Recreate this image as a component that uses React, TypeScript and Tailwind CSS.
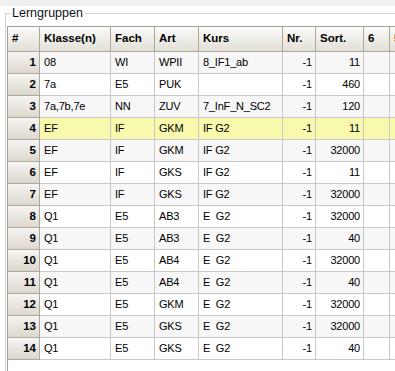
import React from "react";

type Row = {
    nr: number;
    klasse: string;
    fach: string;
    art: string;
    kurs: string;
    n: string;
    sort: string;
};

const rows: Row[] = [
    { nr: 1, klasse: "08", fach: "WI", art: "WPII", kurs: "8_IF1_ab", n: "-1", sort: "11" },
    { nr: 2, klasse: "7a", fach: "E5", art: "PUK", kurs: "", n: "-1", sort: "460" },
    { nr: 3, klasse: "7a,7b,7e", fach: "NN", art: "ZUV", kurs: "7_InF_N_SC2", n: "-1", sort: "120" },
    { nr: 4, klasse: "EF", fach: "IF", art: "GKM", kurs: "IF G2", n: "-1", sort: "11" },
    { nr: 5, klasse: "EF", fach: "IF", art: "GKM", kurs: "IF G2", n: "-1", sort: "32000" },
    { nr: 6, klasse: "EF", fach: "IF", art: "GKS", kurs: "IF G2", n: "-1", sort: "11" },
    { nr: 7, klasse: "EF", fach: "IF", art: "GKS", kurs: "IF G2", n: "-1", sort: "32000" },
    { nr: 8, klasse: "Q1", fach: "E5", art: "AB3", kurs: "E  G2", n: "-1", sort: "32000" },
    { nr: 9, klasse: "Q1", fach: "E5", art: "AB3", kurs: "E  G2", n: "-1", sort: "40" },
    { nr: 10, klasse: "Q1", fach: "E5", art: "AB4", kurs: "E  G2", n: "-1", sort: "32000" },
    { nr: 11, klasse: "Q1", fach: "E5", art: "AB4", kurs: "E  G2", n: "-1", sort: "40" },
    { nr: 12, klasse: "Q1", fach: "E5", art: "GKM", kurs: "E  G2", n: "-1", sort: "32000" },
    { nr: 13, klasse: "Q1", fach: "E5", art: "GKS", kurs: "E  G2", n: "-1", sort: "32000" },
    { nr: 14, klasse: "Q1", fach: "E5", art: "GKS", kurs: "E  G2", n: "-1", sort: "40" },
];

const headCell =
    "h-[25px] shrink-0 flex items-center px-[4px] border-r border-b border-[#aca899] bg-gradient-to-b from-[#fcfbf9] to-[#e2dfd8] font-bold text-[11.5px] text-[#000]";

const cell = "h-[22px] shrink-0 flex items-center px-[4px] border-r border-b border-[#c8c8c8] whitespace-pre";

export default function App() {
    return (
        <div className="w-[395px] h-[371px] overflow-hidden bg-white font-['Liberation_Sans',Arial,sans-serif] text-black">
            <div className="h-[6px] bg-[#f0f0f0]" />

            {/* Groupbox */}
            <div className="relative pt-[7px] pl-[5px] h-[365px]">
                <div className="h-full border-l border-t border-[#d0d0d0] pl-[1px] pt-[12px]">
                    <div className="h-full border-l border-t border-[#a0a0a0] flex flex-col">
                        {/* Header */}
                        <div className="flex">
                            <div className={`${headCell} w-[32px]`}>#</div>
                            <div className={`${headCell} w-[71px]`}>Klasse(n)</div>
                            <div className={`${headCell} w-[44px]`}>Fach</div>
                            <div className={`${headCell} w-[44px]`}>Art</div>
                            <div className={`${headCell} w-[84px]`}>Kurs</div>
                            <div className={`${headCell} w-[33px]`}>Nr.</div>
                            <div className={`${headCell} w-[48px]`}>Sort.</div>
                            <div className={`${headCell} w-[26px]`}>6</div>
                            <div className={`${headCell} w-[40px]`}>5</div>
                        </div>

                        {rows.map((r) => {
                            const bg =
                                r.nr === 4 ? "bg-[#f9f9ad]" : r.nr % 2 === 1 ? "bg-[#f7f7f7]" : "bg-white";
                            return (
                                <div key={r.nr} className="flex text-[11px] tracking-[-0.2px]">
                                    <div className="w-[32px] h-[22px] shrink-0 flex items-center justify-end pr-[3px] border-r border-b border-[#aca899] bg-gradient-to-b from-[#f6f5f2] to-[#dcd8cf] font-bold text-[11.5px] tracking-normal">
                                        {r.nr}
                                    </div>
                                    <div className={`${cell} ${bg} w-[71px]`}>{r.klasse}</div>
                                    <div className={`${cell} ${bg} w-[44px]`}>{r.fach}</div>
                                    <div className={`${cell} ${bg} w-[44px]`}>{r.art}</div>
                                    <div className={`${cell} ${bg} w-[84px]`}>{r.kurs}</div>
                                    <div className={`${cell} ${bg} w-[33px] justify-end pr-[3px]`}>{r.n}</div>
                                    <div className={`${cell} ${bg} w-[48px] justify-end pr-[3px]`}>{r.sort}</div>
                                    <div className={`${cell} ${bg} w-[26px]`} />
                                    <div className={`${cell} ${bg} w-[40px]`} />
                                </div>
                            );
                        })}
                    </div>
                </div>

                {/* Legend over the groupbox line */}
                <div className="absolute left-[10px] top-0 bg-white px-[2px] text-[12.5px] leading-[15px] text-[#101020]">
                    Lerngruppen
                </div>
            </div>
        </div>
    );
}
